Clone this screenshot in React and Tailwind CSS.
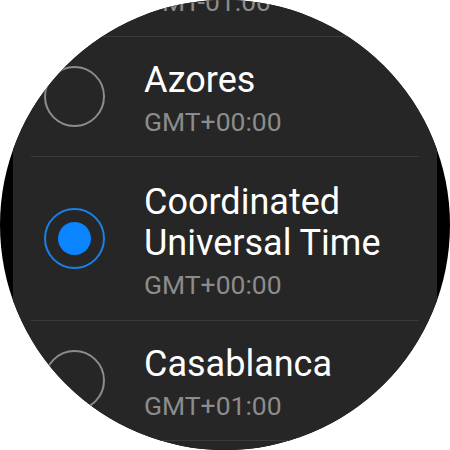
import React from "react";

const items = [
  { title: "Cape Verde", sub: "GMT-01:00", selected: false },
  { title: "Azores", sub: "GMT+00:00", selected: false },
  { title: "Coordinated Universal Time", sub: "GMT+00:00", selected: true },
  { title: "Casablanca", sub: "GMT+01:00", selected: false },
  { title: "Dublin", sub: "GMT+01:00", selected: false },
];

function Radio({ selected }) {
  if (selected) {
    return (
      <div className="w-[61px] h-[61px] shrink-0 rounded-full border-2 border-[#1a80e4] flex items-center justify-center">
        <div className="w-[33px] h-[33px] rounded-full bg-[#0a84ff]" />
      </div>
    );
  }
  return <div className="w-[61px] h-[61px] shrink-0 rounded-full border-2 border-[#8c8c8c]" />;
}

function Row({ item }) {
  return (
    <div className="mx-[18px] border-t border-[#3a3a3a] flex items-center pl-[13px]">
      <Radio selected={item.selected} />
      <div
        className={
          "ml-[39px] flex-1 min-w-0 " +
          (item.selected ? "pt-[25px] pb-[20px]" : "pt-[23px] pb-[19px]")
        }
      >
        <div className="text-[36px] leading-[41px] text-white">{item.title}</div>
        <div className="mt-[6px] text-[26.5px] leading-[30px] text-[#8c8c8c]">{item.sub}</div>
      </div>
    </div>
  );
}

export default function App() {
  return (
    <div
      className="w-[450px] h-[450px] bg-white"
      style={{ fontFamily: "Roboto, 'Noto Sans', sans-serif" }}
    >
      <div className="w-[450px] h-[450px] rounded-full bg-black overflow-hidden">
        <div className="mx-[13px] h-full bg-[#262626] overflow-hidden">
          <div className="-mt-[84px]">
            {items.map((it, i) => (
              <Row key={i} item={it} />
            ))}
          </div>
        </div>
      </div>
    </div>
  );
}
